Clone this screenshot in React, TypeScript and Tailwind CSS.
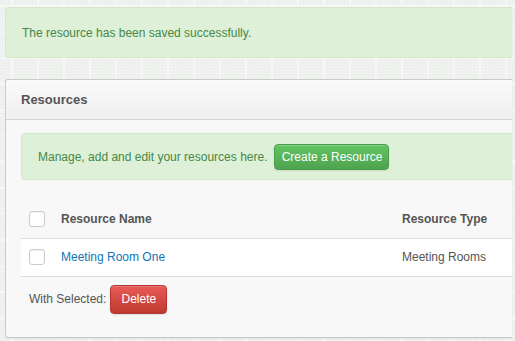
import { useState } from "react";

const rows = [{ id: 1, name: "Meeting Room One", type: "Meeting Rooms" }];

function Checkbox({ checked, onChange }: { checked: boolean; onChange: () => void }) {
  return (
    <button
      type="button"
      onClick={onChange}
      className="w-[16px] h-[16px] rounded-[3px] border border-[#cbcbcb] bg-white shadow-[inset_0_1px_1px_rgba(0,0,0,0.05)] flex items-center justify-center text-[10px] text-[#555]"
    >
      {checked ? "✓" : ""}
    </button>
  );
}

function App() {
  const [selected, setSelected] = useState<number[]>([]);
  const allChecked = selected.length === rows.length;

  const toggle = (id: number) => {
    setSelected(selected.includes(id) ? selected.filter((s) => s !== id) : [...selected, id]);
  };

  return (
    <div className="w-[515px] h-[341px] overflow-hidden font-['Liberation_Sans',Arial,sans-serif] text-[12px] text-[#555] bg-[#eef0ee] [background-image:linear-gradient(to_right,#f5f6f5_2px,transparent_2px),linear-gradient(to_bottom,#f5f6f5_2px,transparent_2px),radial-gradient(circle,#f8f8f8_0.7px,transparent_0.9px)] [background-size:26px_26px,26px_26px,3px_3px] [background-position:11px_5px,11px_5px,0_0]">
      <div className="pl-[5px] pr-[3px] pt-[7px]">
        <div className="h-[51px] flex items-center pl-[16px] bg-[#dff0d8] text-[#468847] rounded-l-[4px] border-y border-l border-[#d6e9c6]">
          The resource has been saved successfully.
        </div>

        <div className="mt-[21px] h-[259px] bg-[#f7f8f7] border-y border-l border-[#c9cbc9] rounded-l-[3px] shadow-[0_1px_1px_rgba(0,0,0,0.05)]">
          <div className="h-[40px] flex items-center px-[15px] border-b border-[#d2d4d2] bg-gradient-to-b from-[#fafafa] to-[#efefef] rounded-tl-[3px]">
            <span className="text-[13px] font-bold text-[#555]">Resources</span>
          </div>

          <div className="pl-[15px] pt-[13px]">
            <div className="h-[47px] flex items-center pl-[16px] bg-[#dff0d8] border-y border-l border-[#d6e9c6] rounded-l-[4px] text-[#468847]">
              <span>Manage, add and edit your resources here.</span>
              <button
                type="button"
                className="ml-[7px] h-[26px] w-[115px] rounded-[4px] border border-[#4a9c4a] bg-gradient-to-b from-[#62c462] to-[#4fa34f] text-white shadow-[inset_0_1px_0_rgba(255,255,255,0.2),0_1px_2px_rgba(0,0,0,0.1)]"
              >
                Create a Resource
              </button>
            </div>

            <table className="mt-[21px] w-full border-collapse text-left">
              <thead>
                <tr className="h-[37px] border-b border-[#dcdedc]">
                  <th className="w-[40px] pl-[8px]">
                    <Checkbox
                      checked={allChecked}
                      onChange={() => setSelected(allChecked ? [] : rows.map((r) => r.id))}
                    />
                  </th>
                  <th className="w-[341px] font-bold text-[#555]">Resource Name</th>
                  <th className="font-bold text-[#555]">Resource Type</th>
                </tr>
              </thead>
              <tbody>
                {rows.map((row) => (
                  <tr key={row.id} className="h-[38px] bg-white border-b border-[#dcdedc]">
                    <td className="pl-[8px]">
                      <Checkbox checked={selected.includes(row.id)} onChange={() => toggle(row.id)} />
                    </td>
                    <td>
                      <a href="#" className="text-[#0f76b8]">
                        {row.name}
                      </a>
                    </td>
                    <td className="text-[#555]">{row.type}</td>
                  </tr>
                ))}
              </tbody>
            </table>

            <div className="mt-[8px] pl-[8px] flex items-center gap-[4px]">
              <span className="text-[#555]">With Selected:</span>
              <button
                type="button"
                className="h-[29px] w-[57px] rounded-[4px] border border-[#b53530] bg-gradient-to-b from-[#e85a56] to-[#c0392f] text-white shadow-[inset_0_1px_0_rgba(255,255,255,0.2),0_1px_2px_rgba(0,0,0,0.1)]"
              >
                Delete
              </button>
            </div>
          </div>
        </div>
      </div>
    </div>
  );
}

export default App;
